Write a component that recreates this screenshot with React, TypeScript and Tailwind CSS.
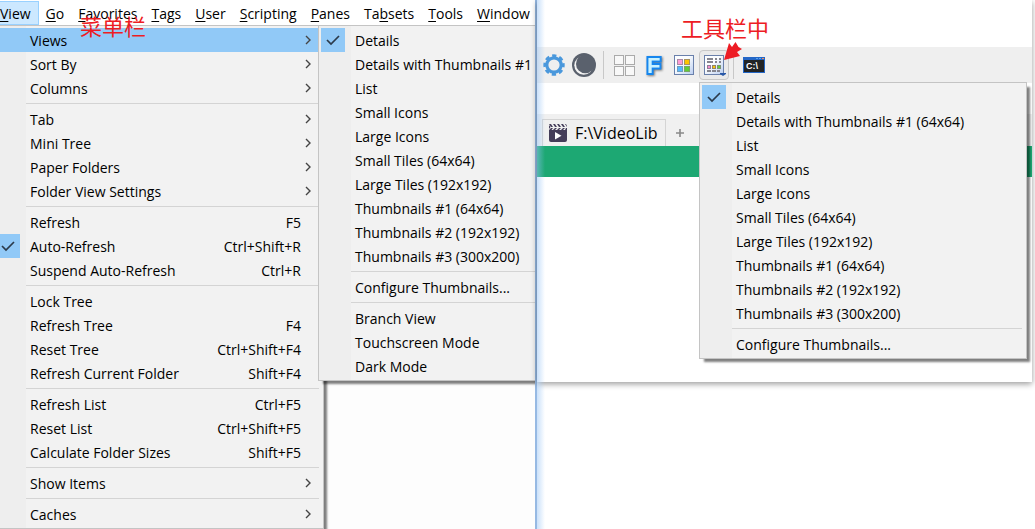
import * as React from "react";
import { clsx } from "clsx";

type Entry = "-" | { label: string; keys?: string; checked?: boolean; sub?: boolean; active?: boolean };

const menuBar = [
  ["", "V", "iew"],
  ["", "G", "o"],
  ["", "F", "avorites"],
  ["", "T", "ags"],
  ["", "U", "ser"],
  ["", "S", "cripting"],
  ["", "P", "anes"],
  ["Ta", "b", "sets"],
  ["", "T", "ools"],
  ["", "W", "indow"],
];

const viewMenu: Entry[] = [
  { label: "Views", sub: true, active: true },
  { label: "Sort By", sub: true },
  { label: "Columns", sub: true },
  "-",
  { label: "Tab", sub: true },
  { label: "Mini Tree", sub: true },
  { label: "Paper Folders", sub: true },
  { label: "Folder View Settings", sub: true },
  "-",
  { label: "Refresh", keys: "F5" },
  { label: "Auto-Refresh", keys: "Ctrl+Shift+R", checked: true },
  { label: "Suspend Auto-Refresh", keys: "Ctrl+R" },
  "-",
  { label: "Lock Tree" },
  { label: "Refresh Tree", keys: "F4" },
  { label: "Reset Tree", keys: "Ctrl+Shift+F4" },
  { label: "Refresh Current Folder", keys: "Shift+F4" },
  "-",
  { label: "Refresh List", keys: "Ctrl+F5" },
  { label: "Reset List", keys: "Ctrl+Shift+F5" },
  { label: "Calculate Folder Sizes", keys: "Shift+F5" },
  "-",
  { label: "Show Items", sub: true },
  "-",
  { label: "Caches", sub: true },
];

const viewModes: Entry[] = [
  { label: "Details", checked: true },
  { label: "Details with Thumbnails #1 (64x64)" },
  { label: "List" },
  { label: "Small Icons" },
  { label: "Large Icons" },
  { label: "Small Tiles (64x64)" },
  { label: "Large Tiles (192x192)" },
  { label: "Thumbnails #1 (64x64)" },
  { label: "Thumbnails #2 (192x192)" },
  { label: "Thumbnails #3 (300x200)" },
  "-",
  { label: "Configure Thumbnails..." },
];

const viewsSubmenu: Entry[] = [
  ...viewModes,
  "-",
  { label: "Branch View" },
  { label: "Touchscreen Mode" },
  { label: "Dark Mode" },
];

function Check() {
  return (
    <svg className="h-6 w-6" viewBox="0 0 24 24" fill="none" stroke="#2b3a4a" strokeWidth="1.7">
      <path d="M6 12 L10 16 L18 8" />
    </svg>
  );
}

function Menu({ items, label, className }: { items: Entry[]; label: string; className?: string }) {
  return (
    <div
      role="menu"
      aria-label={label}
      className={clsx(
        "border border-[#c4c4c4] bg-[linear-gradient(to_right,#eeeeee_32px,#f2f2f2_32px)] py-0.5 shadow-[4px_4px_2px_-1px_rgba(0,0,0,0.5)]",
        className
      )}
    >
      {items.map((item, i) =>
        item === "-" ? (
          <div key={i} role="separator" className="ml-8 mr-1 flex h-[7px] items-center">
            <div className="h-px w-full bg-[#d4d4d4]" />
          </div>
        ) : (
          <button
            key={i}
            type="button"
            role="menuitem"
            className={clsx(
              "mx-0.5 flex h-6 w-[calc(100%-4px)] items-center whitespace-nowrap text-left",
              item.active && "bg-[#91c9f7]"
            )}
          >
            <span className={clsx("h-6 w-6 shrink-0", item.checked && "bg-[#91c9f7]")}>
              {item.checked && <Check />}
            </span>
            <span className="ml-2.5 flex-1 pt-0.5">{item.label}</span>
            {item.keys && <span className="mr-5 pt-0.5">{item.keys}</span>}
            {item.sub && (
              <svg className="mr-[9px] h-3 w-2" viewBox="0 0 8 12" fill="none" stroke="#444" strokeWidth="1.4">
                <path d="M2 2 L6 6 L2 10" />
              </svg>
            )}
          </button>
        )
      )}
    </div>
  );
}

function Gear() {
  return (
    <svg className="h-[22px] w-[22px]" viewBox="0 0 22 22" fill="none" stroke="#4a98dc">
      <circle cx="11" cy="11" r="7.2" strokeWidth="3.2" />
      <circle cx="11" cy="11" r="9.2" strokeWidth="3" strokeDasharray="4.2 3.025" strokeDashoffset="2.1" />
    </svg>
  );
}

function Moon() {
  return (
    <svg className="h-6 w-6" viewBox="0 0 24 24">
      <circle cx="12" cy="12" r="12" fill="#5a616d" />
      <circle cx="11.7" cy="12.3" r="9.4" fill="#f3f3f3" />
      <circle cx="13.3" cy="10.9" r="9.3" fill="#5a616d" />
    </svg>
  );
}

function Panes() {
  return (
    <svg className="h-[21px] w-[21px]" viewBox="0 0 21 21" fill="#f8f8f8" stroke="#aaa">
      <rect x="0.5" y="0.5" width="9" height="9" />
      <rect x="11.5" y="0.5" width="9" height="9" />
      <rect x="0.5" y="11.5" width="9" height="9" />
      <rect x="11.5" y="11.5" width="9" height="9" />
    </svg>
  );
}

function LetterF() {
  return (
    <svg className="h-6 w-5 drop-shadow-[1px_1px_1px_rgba(0,0,0,0.5)]" viewBox="0 0 20 24">
      <g fontFamily="Liberation Sans, sans-serif" fontWeight="700" fontSize="22" strokeLinejoin="miter">
        <text x="3" y="20" fill="#1686ee" stroke="#1686ee" strokeWidth="4">F</text>
        <text x="3" y="20" fill="#c9f2ff">F</text>
      </g>
    </svg>
  );
}

function Thumbs() {
  return (
    <svg className="h-5 w-5" viewBox="0 0 20 20">
      <defs>
        <linearGradient id="sheet" x1="0" y1="0" x2="1" y2="1">
          <stop offset="0.4" stopColor="#fbfdff" />
          <stop offset="1" stopColor="#b9cdf0" />
        </linearGradient>
      </defs>
      <rect x="0.5" y="0.5" width="19" height="19" fill="url(#sheet)" stroke="#6a80ab" />
      <rect x="3.5" y="4.5" width="5" height="5" fill="#ff9bd5" stroke="#a88aa4" />
      <rect x="10.5" y="4.5" width="5" height="5" fill="#ffc400" stroke="#a8925e" />
      <rect x="3.5" y="11.5" width="5" height="5" fill="#55b9ff" stroke="#6f9dbd" />
      <rect x="10.5" y="11.5" width="5" height="5" fill="#63cc37" stroke="#79a665" />
    </svg>
  );
}

function Details() {
  return (
    <svg className="h-[22px] w-6" viewBox="0 0 24 22">
      <rect x="2.5" y="1.5" width="19" height="19" fill="url(#sheet)" stroke="#6a80ab" />
      <path
        d="M5 4h6v2H5zM13 4h2v2h-2zM17 4h2v2h-2zM5 7h6v2H5zM13 7h2v2h-2zM17 7h2v2h-2zM5 16h4v2H5zM10 16h4v2h-4zM15 16h3v2h-3z"
        fill="#85858f"
      />
      <rect x="5.5" y="11.5" width="3" height="3" fill="#f38ccb" stroke="#8f7f96" />
      <rect x="10.5" y="11.5" width="3" height="3" fill="#ffc400" stroke="#8f866c" />
      <rect x="15.5" y="11.5" width="3" height="3" fill="#65cf3a" stroke="#7c9274" />
      <path d="M18 19h6v1l-3 2-3-2z" fill="#2858a8" />
    </svg>
  );
}

function Console() {
  return (
    <svg className="h-4 w-[22px]" viewBox="0 0 22 16">
      <rect width="22" height="16" fill="#2467c7" />
      <rect x="1" y="3" width="20" height="12" fill="#222426" />
      <path d="M13 1h2v1h-2zM16 1h2v1h-2z" fill="#5aa4f0" />
      <path d="M19 1h2v1h-2z" fill="#ff8b4a" />
      <text x="3" y="12" fontFamily="Liberation Sans, sans-serif" fontWeight="700" fontSize="9" fill="#fff">C:\</text>
    </svg>
  );
}

function Clapper() {
  return (
    <svg className="h-[18px] w-[18px]" viewBox="0 0 18 18" fill="#443d59">
      <path d="M0 0h2l2 3H2zM4 0h2l2 3H6zM8 0h2l2 3h-2zM12 0h2l2 3h-2zM16 0h1l1 2v1zM0 1l1.5 2L0 5zM2 4h2L2.5 6H0zM6 4h2L6 6H4zM10 4h2l-2 2H8zM14 4h2l-2 2h-2zM17 4h1v2h-2z" />
      <path d="M0 6h18v10a2 2 0 0 1-2 2H2a2 2 0 0 1-2-2z" />
      <path d="M6 8l6.5 3.8L6 15.5z" fill="#fff" />
    </svg>
  );
}

function ToolButton({ label, className, children }: { label: string; className?: string; children: React.ReactNode }) {
  return (
    <button type="button" aria-label={label} className={clsx("flex h-[30px] w-[30px] items-center justify-center", className)}>
      {children}
    </button>
  );
}

export default function App() {
  return (
    <div className="grid h-screen grid-cols-[537fr_498fr] overflow-hidden bg-white font-['Open_Sans','Noto_Sans_CJK_SC',sans-serif] text-sm text-black">
      <section className="relative overflow-hidden border-r-2 border-[#96b9e3] bg-[#fdfdfd]">
        <nav className="flex h-[26px] items-start border-b border-[#cccccc] bg-white">
          {menuBar.map(([before, key, after], i) => (
            <button
              key={i}
              type="button"
              className={clsx(
                "mt-px h-6 whitespace-nowrap pt-0.5",
                i === 0 ? "border border-l-0 border-[#99d1ff] bg-[#cce8ff] pr-[7px]" : "px-[7px]"
              )}
            >
              {before}
              <span className="underline underline-offset-2">{key}</span>
              {after}
            </button>
          ))}
        </nav>
        <span className="absolute left-20 top-2.5 z-10 text-[22px] leading-8 text-[#ed1c24]">菜单栏</span>
        <div className="relative -mt-px">
          <Menu items={viewMenu} label="View" className="-ml-[7px] w-[331px]" />
          <Menu items={viewsSubmenu} label="Views" className="absolute left-[318px] top-0 w-[328px]" />
        </div>
      </section>

      <section className="relative">
        <div className="absolute inset-y-0 left-0 z-10 w-2 bg-gradient-to-r from-[#96c3f5]/50 to-transparent" />
        <div className="mr-[3px] h-[382px] bg-white shadow-[0_2px_6px_rgba(0,0,0,0.4)]">
          <div className="h-[47px]" />
          <div className="flex h-9 items-center bg-[#efefef] pl-0.5">
            <ToolButton label="Preferences"><Gear /></ToolButton>
            <ToolButton label="Dark Mode"><Moon /></ToolButton>
            <div className="ml-1 mr-[5px] h-7 w-px bg-[#c8c8c8]" />
            <ToolButton label="Dual Pane"><Panes /></ToolButton>
            <ToolButton label="Folders"><LetterF /></ToolButton>
            <ToolButton label="Thumbnails"><Thumbs /></ToolButton>
            <div className="relative">
              <ToolButton label="Views" className="rounded border border-[#c8c8c8] bg-[#eaeaea]"><Details /></ToolButton>
              <Menu items={viewModes} label="View mode" className="absolute left-0 top-8 z-20 w-[328px]" />
              <span className="absolute -left-[18px] -top-[38px] whitespace-nowrap text-[22px] leading-8 text-[#ed1c24]">工具栏中</span>
              <svg className="absolute -top-2 left-6 h-5 w-5" viewBox="0 0 20 20" fill="#ed1c24">
                <path d="M1 18 L6 1 L9 5 L12.5 0 L15.5 5 L19 7 L14 10 L17 14 Z" />
              </svg>
            </div>
            <div className="ml-1 mr-[5px] h-7 w-px bg-[#c8c8c8]" />
            <ToolButton label="Command Prompt"><Console /></ToolButton>
          </div>
          <div className="mt-[31px] flex h-8 items-end bg-[#f0f0f0]">
            <button
              type="button"
              className="ml-[5px] flex h-[27px] items-center gap-2 whitespace-nowrap border border-b-0 border-[#d4d4d4] pl-1.5 pr-2 text-base"
            >
              <Clapper />
              F:\VideoLib
            </button>
            <button type="button" aria-label="New tab" className="flex h-[27px] w-7 items-center justify-center">
              <svg className="h-2 w-2" viewBox="0 0 8 8" fill="none" stroke="#888" strokeWidth="1.6">
                <path d="M4 0V8M0 4H8" />
              </svg>
            </button>
          </div>
          <div className="h-[31px] bg-[#1da873]" />
        </div>
      </section>
    </div>
  );
}
